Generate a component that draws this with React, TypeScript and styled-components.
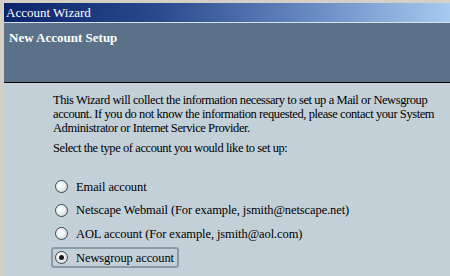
import { useState } from 'react';
import styled, { createGlobalStyle } from 'styled-components';

const GlobalStyle = createGlobalStyle`
  html, body {
    margin: 0;
    padding: 0;
    background: #d4d0c8;
  }
  body {
    font-family: "Liberation Serif", "Times New Roman", serif;
  }
`;

const Window = styled.div`
  width: 450px;
  height: 276px;
  box-sizing: border-box;
  padding: 3px 0 0 4px;
  background: #d4d0c8;
  display: flex;
  flex-direction: column;
  overflow: hidden;
`;

const TitleBar = styled.div`
  height: 19px;
  display: flex;
  align-items: center;
  padding-left: 2px;
  background: linear-gradient(to right, #0a246a 0%, #2a4a8c 35%, #6a8cc4 70%, #a6caf0 100%);
  color: #ffffff;
  font-size: 13px;
  border-bottom: 1px solid #d8e0e8;
`;

const Header = styled.div`
  height: 60px;
  background: #5b7189;
  border-bottom: 1px solid #000000;
  padding: 7px 0 0 5px;
  box-sizing: border-box;
  color: #ffffff;
  font-size: 13px;
  font-weight: bold;
`;

const Body = styled.div`
  flex: 1;
  background: #c3d0d8;
  padding: 10px 0 0 49px;
  color: #000000;
  font-size: 12.5px;
  line-height: 14px;
`;

const Paragraph = styled.p`
  margin: 0 0 6px 0;
  white-space: nowrap;
  letter-spacing: -0.42px;
`;

const OptionList = styled.div`
  display: flex;
  flex-direction: column;
  gap: 2.7px;
  margin: 21px 0 0 -2px;
`;

const Option = styled.label<{ $focused: boolean }>`
  display: flex;
  align-items: center;
  gap: 8px;
  height: 17px;
  width: fit-content;
  padding: 0 3px 0 2px;
  border: 2px solid ${(p) => (p.$focused ? '#8c9ba6' : 'transparent')};
  border-radius: 3px;
  cursor: default;
  white-space: nowrap;
  letter-spacing: -0.1px;
`;

const Radio = styled.span<{ $checked: boolean }>`
  width: 11px;
  height: 11px;
  border-radius: 50%;
  border: 1px solid #3c4650;
  background: radial-gradient(circle at 40% 35%, #ffffff 0%, #e8ecef 55%, #b8c2c9 100%);
  display: flex;
  align-items: center;
  justify-content: center;
  flex-shrink: 0;

  &::after {
    content: '';
    width: 5px;
    height: 5px;
    border-radius: 50%;
    background: #1a1a1a;
    display: ${(p) => (p.$checked ? 'block' : 'none')};
  }
`;

const options = [
  'Email account',
  'Netscape Webmail (For example, jsmith@netscape.net)',
  'AOL account (For example, jsmith@aol.com)',
  'Newsgroup account',
];

export default function App() {
  const [selected, setSelected] = useState(3);

  return (
    <>
      <GlobalStyle />
      <Window>
        <TitleBar>Account Wizard</TitleBar>
        <Header>New Account Setup</Header>
        <Body>
          <Paragraph>
            This Wizard will collect the information necessary to set up a Mail or Newsgroup
            <br />
            account. If you do not know the information requested, please contact your System
            <br />
            Administrator or Internet Service Provider.
          </Paragraph>
          <Paragraph>Select the type of account you would like to set up:</Paragraph>
          <OptionList>
            {options.map((text, i) => (
              <Option key={text} $focused={selected === i} onClick={() => setSelected(i)}>
                <Radio $checked={selected === i} />
                {text}
              </Option>
            ))}
          </OptionList>
        </Body>
      </Window>
    </>
  );
}
